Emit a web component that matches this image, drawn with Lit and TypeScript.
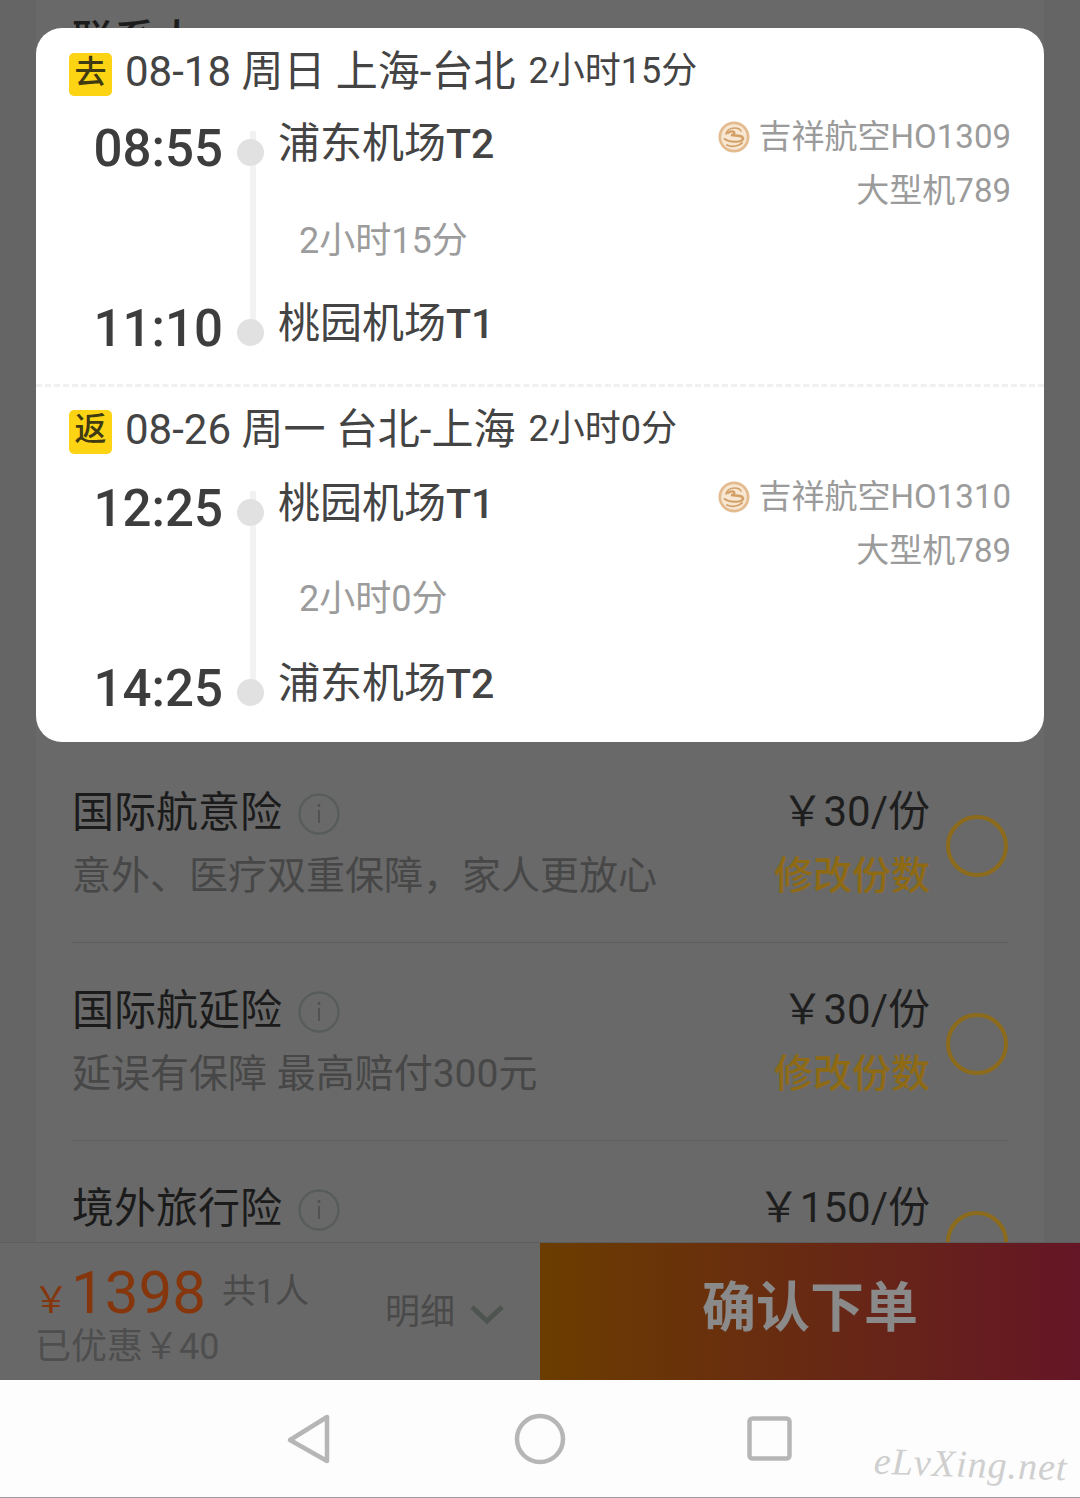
// app.ts
import { LitElement, html, css, svg, TemplateResult } from 'lit';
import { customElement } from 'lit/decorators.js';

interface Leg {
  badge: string;
  date: string;
  total: string;
  depTime: string;
  depPort: string;
  depTerm: string;
  arrTime: string;
  arrPort: string;
  arrTerm: string;
  airline: string;
  plane: string;
}

interface Insurance {
  name: string;
  desc: string;
  price: string;
  editable: boolean;
}

const LEGS: Leg[] = [
  {
    badge: '去', date: '08-18 周日 上海-台北', total: '2小时15分',
    depTime: '08:55', depPort: '浦东机场', depTerm: 'T2',
    arrTime: '11:10', arrPort: '桃园机场', arrTerm: 'T1',
    airline: '吉祥航空HO1309', plane: '大型机789',
  },
  {
    badge: '返', date: '08-26 周一 台北-上海', total: '2小时0分',
    depTime: '12:25', depPort: '桃园机场', depTerm: 'T1',
    arrTime: '14:25', arrPort: '浦东机场', arrTerm: 'T2',
    airline: '吉祥航空HO1310', plane: '大型机789',
  },
];

// the third row runs under the footer, so its second line never shows
const INSURANCES: Insurance[] = [
  { name: '国际航意险', desc: '意外、医疗双重保障，家人更放心', price: '30', editable: true },
  { name: '国际航延险', desc: '延误有保障 最高赔付300元', price: '30', editable: true },
  { name: '境外旅行险', desc: '', price: '150', editable: false },
];

// Round airline medallion, gold dragon on cream
const airlineLogo = svg`
  <svg class="logo" viewBox="0 0 32 32" width="32" height="32">
    <circle cx="16" cy="16" r="15.5" fill="#e3bb8f"/>
    <circle cx="16" cy="16" r="12.8" fill="#f6e6d2"/>
    <g fill="none" stroke="#d39f66" stroke-linecap="round">
      <path d="M8 13c1-4 5-6 9-6 3 0 5 1 6 3" stroke-width="1.6"/>
      <path d="M10 12c2-2 5-2 6-1s0 3-3 3l9 1c3 .5 4 3 2 4" stroke-width="2.4"/>
      <path d="M6.500 18c3 2 9 3 14 2.500 1.500 0 2.500-.5 3.500-1" stroke-width="2"/>
      <path d="M9 24c3 1.500 8 1.500 12 0l3-2" stroke-width="1.800"/>
    </g>
  </svg>
`;

const infoIcon = svg`
  <svg class="info" viewBox="0 0 42 42" width="42" height="42">
    <circle cx="21" cy="21" r="19.5" fill="none" stroke="#585d59" stroke-width="2.4"/>
    <path d="M21 17v13" stroke="#505050" stroke-width="1.8"/>
    <circle cx="21" cy="12.500" r="1.400" fill="#505050"/>
  </svg>
`;

@customElement('flight-popup')
export class FlightPopup extends LitElement {
  static styles = css`
    :host {
      display: block;
      font-family: Roboto, "Noto Sans CJK SC", sans-serif;
    }
    .popup {
      background: #fff;
      border-radius: 26px;
      overflow: hidden;
    }
    .leg {
      height: 356px;
      box-sizing: border-box;
      padding-top: 25px;
    }
    .leg + .leg {
      height: 358px;
      padding-top: 24px;
      border-top: 3px dashed #f0f0f0;
    }
    .head {
      display: flex;
      align-items: center;
      height: 42px;
      padding-left: 33px;
      color: #444;
    }
    .badge {
      width: 43px;
      height: 43px;
      margin-right: 13px;
      border-radius: 5px;
      background: #fdd414;
      color: #3f3a12;
      font-size: 32px;
      font-weight: 500;
      line-height: 38px;
      text-align: center;
    }
    .leg + .leg .badge {
      height: 44px;
    }
    .date {
      margin-bottom: 14px;
      font-size: 42px;
      white-space: pre;
    }
    .total {
      margin: 0 0 14px 13px;
      font-size: 36px;
    }
    .route {
      display: grid;
      grid-template-columns: 187px 55px 1fr auto;
      grid-template-rows: 60px 120px 60px;
      margin-top: 17px;
      padding-right: 33px;
    }
    .leg + .leg .route {
      margin-top: 19px;
    }
    .time {
      grid-column: 1;
      padding-top: 7px;
      box-sizing: border-box;
      font-size: 51px;
      font-weight: 500;
      line-height: 60px;
      color: #3d3d3d;
      text-align: right;
    }
    .rail {
      grid-column: 2;
      grid-row: 1 / 4;
      justify-self: center;
      width: 6px;
      margin: 19px 0 27px 4px;
      background: #f2f2f2;
    }
    .dot {
      grid-column: 2;
      justify-self: center;
      align-self: start;
      width: 27px;
      height: 27px;
      margin-top: 27px;
      border-radius: 50%;
      background: #e1e1e1;
    }
    .port {
      grid-column: 3;
      box-sizing: border-box;
      padding-top: 2px;
      font-size: 42px;
      line-height: 60px;
      color: #444;
    }
    .port b {
      font-weight: 500;
      font-size: 41px;
    }
    .span {
      grid-column: 3;
      grid-row: 2;
      align-self: center;
      margin: 10px 0 0 21px;
      font-size: 36px;
      color: #9c9c9c;
    }
    .leg + .leg .span {
      margin-top: 6px;
    }
    .carrier {
      grid-column: 4;
      grid-row: 1 / 3;
      margin-top: -2px;
      font-size: 33px;
      line-height: 54px;
      color: #9b9b9b;
      text-align: right;
    }
    .carrier .line {
      display: flex;
      align-items: center;
      justify-content: flex-end;
    }
    .logo {
      margin-right: 9px;
    }
  `;

  renderLeg(leg: Leg): TemplateResult {
    return html`
      <section class="leg">
        <div class="head">
          <span class="badge">${leg.badge}</span>
          <span class="date">${leg.date}</span>
          <span class="total">${leg.total}</span>
        </div>
        <div class="route">
          <div class="rail"></div>
          <div class="time" style="grid-row:1">${leg.depTime}</div>
          <div class="dot" style="grid-row:1"></div>
          <div class="port" style="grid-row:1">${leg.depPort}<b>${leg.depTerm}</b></div>
          <div class="span">${leg.total}</div>
          <div class="time" style="grid-row:3">${leg.arrTime}</div>
          <div class="dot" style="grid-row:3"></div>
          <div class="port" style="grid-row:3">${leg.arrPort}<b>${leg.arrTerm}</b></div>
          <div class="carrier">
            <div class="line">${airlineLogo}${leg.airline}</div>
            <div class="line">${leg.plane}</div>
          </div>
        </div>
      </section>
    `;
  }

  render(): TemplateResult {
    return html`<div class="popup">${LEGS.map((leg) => this.renderLeg(leg))}</div>`;
  }
}

@customElement('app-root')
export class AppRoot extends LitElement {
  static styles = css`
    :host {
      display: block;
      width: 1080px;
      height: 1498px;
      font-family: Roboto, "Noto Sans CJK SC", sans-serif;
    }
    .page {
      position: relative;
      display: flex;
      flex-direction: column;
      height: 1498px;
      overflow: hidden;
      background: #fff;
    }
    .scroll {
      flex: 1;
      min-height: 0;
      overflow: hidden;
      padding: 0 36px;
      background: #656565;
    }
    .card {
      padding: 0 36px;
      background: #696969;
    }
    .contact {
      height: 745px;
      padding-top: 6px;
      box-sizing: border-box;
      font-size: 42px;
      font-weight: 500;
      color: #1c1c1c;
    }
    .row {
      display: flex;
      height: 198px;
      box-sizing: border-box;
      padding-top: 45px;
      border-bottom: 1px solid #5e5e5e;
    }
    .main {
      flex: 1;
    }
    .name {
      display: flex;
      align-items: center;
      height: 44px;
      font-size: 42px;
      color: #1b1b1b;
    }
    .name span {
      margin-bottom: 8px;
    }
    .info {
      margin: 4px 0 0 16px;
    }
    .desc {
      margin-top: 20px;
      font-size: 39px;
      line-height: 44px;
      color: #474747;
    }
    .side {
      text-align: right;
    }
    .price {
      height: 44px;
      font-size: 42px;
      line-height: 44px;
      color: #1e1e1e;
    }
    .edit {
      margin-top: 20px;
      font-size: 39px;
      font-weight: 500;
      line-height: 44px;
      color: #8f6a14;
    }
    .radio {
      width: 62px;
      height: 62px;
      box-sizing: border-box;
      margin: 25px 0 0 16px;
      border: 4px solid #8c6b1c;
      border-radius: 50%;
    }
    .footer {
      display: flex;
      height: 138px;
      box-sizing: border-box;
      border-top: 1px solid #5d5d5d;
      background: #686868;
    }
    .total {
      flex: 0 0 385px;
      box-sizing: border-box;
      padding: 14px 0 0 37px;
    }
    .sum {
      display: flex;
      align-items: baseline;
      height: 66px;
      color: #85360d;
    }
    .sum .yen {
      margin: 0 2px 0 -4px;
      font-size: 36px;
    }
    .sum .amount {
      font-size: 60px;
    }
    .sum .people {
      position: relative;
      top: -10px;
      margin-left: 16px;
      font-size: 34px;
      color: #4a4a4a;
    }
    .saved {
      margin: 2px 0 0 -2px;
      font-size: 36px;
      line-height: 44px;
      color: #4e4e4e;
    }
    .detail {
      display: flex;
      flex: 1;
      align-items: center;
      gap: 15px;
      font-size: 35px;
      color: #4a4a4a;
    }
    .detail span {
      margin-bottom: 6px;
    }
    .detail svg {
      margin-top: 4px;
    }
    .confirm {
      flex: 0 0 540px;
      display: flex;
      align-items: center;
      justify-content: center;
      padding-bottom: 17px;
      box-sizing: border-box;
      background: linear-gradient(90deg, #6b3d00, #651626);
      color: #8a8a8a;
      font-size: 54px;
      font-weight: 700;
    }
    .nav {
      height: 118px;
      box-sizing: border-box;
      border-bottom: 1px solid #9a9a9a;
      background: #fdfdfd;
    }
    .nav svg {
      display: block;
    }
    .watermark {
      position: absolute;
      left: 874px;
      top: 1442px;
      font-family: "Liberation Serif", serif;
      font-style: italic;
      font-size: 38px;
      letter-spacing: 1px;
      color: #cfcfcf;
      transform: rotate(2deg);
    }
    flight-popup {
      position: absolute;
      left: 36px;
      top: 28px;
      width: 1008px;
    }
  `;

  renderRow(item: Insurance): TemplateResult {
    return html`
      <div class="row">
        <div class="main">
          <div class="name"><span>${item.name}</span>${infoIcon}</div>
          <div class="desc">${item.desc}</div>
        </div>
        <div class="side">
          <div class="price">￥${item.price}/份</div>
          ${item.editable ? html`<div class="edit">修改份数</div>` : ''}
        </div>
        <div class="radio"></div>
      </div>
    `;
  }

  render(): TemplateResult {
    return html`
      <div class="page">
        <div class="scroll">
          <div class="card">
            <div class="contact">联系人</div>
            ${INSURANCES.map((item) => this.renderRow(item))}
          </div>
        </div>
        <div class="footer">
          <div class="total">
            <div class="sum">
              <span class="yen">￥</span><span class="amount">1398</span><span class="people">共1人</span>
            </div>
            <div class="saved">已优惠￥40</div>
          </div>
          <div class="detail">
            <span>明细</span>
            <svg width="34" height="20" viewBox="0 0 34 20">
              <path d="M2 3l15 14L32 3" fill="none" stroke="#4e5450" stroke-width="5"/>
            </svg>
          </div>
          <div class="confirm">确认下单</div>
        </div>
        <div class="nav">
          <svg width="1080" height="117" viewBox="0 0 1080 117">
            <path d="M327 37v44l-37-21z" fill="none" stroke="#b6b6b6" stroke-width="4.5" stroke-linejoin="round"/>
            <circle cx="540" cy="59" r="23" fill="none" stroke="#b6b6b6" stroke-width="4.5"/>
            <rect x="749.5" y="38.5" width="40" height="40" rx="3" fill="none" stroke="#b6b6b6" stroke-width="4.5"/>
          </svg>
        </div>
        <div class="watermark">eLvXing.net</div>
        <flight-popup></flight-popup>
      </div>
    `;
  }
}
